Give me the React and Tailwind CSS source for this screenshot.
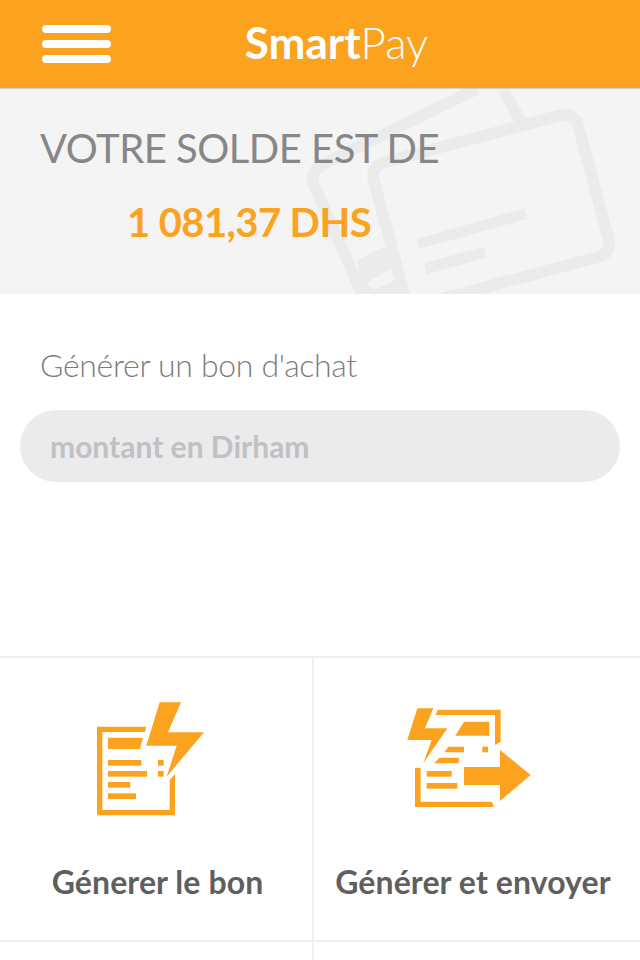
const lato = { fontFamily: "Lato, 'Open Sans', sans-serif" };

function MenuIcon() {
  return (
    <div className="flex flex-col gap-[7px] w-[69px]">
      <span className="h-[8px] rounded-full bg-white" />
      <span className="h-[8px] rounded-full bg-white" />
      <span className="h-[8px] rounded-full bg-white" />
    </div>
  );
}

function Wallet() {
  return (
    <svg
      className="absolute right-0 top-0 w-[350px] h-[205px]"
      viewBox="0 12 1050 615"
      fill="none"
    >
      <g stroke="#ebebeb" strokeWidth="35">
        <path d="M560 12 L105 235 Q55 258 72 300 L222 640" />
        <path d="M640 12 L692 110" />
        <rect x="240" y="244" width="635" height="440" rx="40" transform="rotate(-15 240 244)" />
      </g>
      <path
        fillRule="evenodd"
        fill="#ebebeb"
        d="M203 524 L282 486 L352 627 L210 627 Z M232 592 Q240 618 258 612 L312 586 L302 552 Z"
      />
      <path fill="#ebebeb" d="M380 462 L705 370 L712 402 L388 492 Z M402 535 L580 485 L588 518 L410 568 Z" />
    </svg>
  );
}

function BoltDocIcon() {
  return (
    <svg width="150" height="135" viewBox="0 0 450 405" fill="#fba21f">
      <path d="M84 110 H232 L228 126 H100 V360 H302 V270 L318 252 V376 H84 Z" />
      <path d="M117 143 H222 L213 177 H117 Z" />
      <rect x="117" y="210" width="100" height="17" />
      <rect x="117" y="243" width="117" height="17" />
      <rect x="117" y="276" width="67" height="17" />
      <rect x="117" y="310" width="84" height="17" />
      <rect x="267" y="210" width="17" height="17" />
      <rect x="267" y="243" width="17" height="17" />
      <path d="M272 37 H336 L297 127 H405 L293 260 L323 167 H232 Z" />
    </svg>
  );
}

function BoltSendIcon() {
  return (
    <svg width="150" height="120" viewBox="0 0 450 360" fill="#fba21f">
      <path d="M82 40 H130 L105 100 H172 L100 205 L125 135 H52 Z" />
      <path d="M143 44 H332 V140 L315 150 V60 H137 Z" />
      <path d="M222 80 H298 V122 H196 Z" />
      <path d="M175 155 H222 V172 H163 Z" />
      <path d="M148 188 H207 L205 205 H133 Z" />
      <rect x="277" y="155" width="17" height="17" />
      <path d="M75 218 H92 V320 H305 L312 336 H75 Z" />
      <rect x="110" y="228" width="75" height="17" />
      <rect x="110" y="264" width="92" height="17" />
      <path d="M222 216 H330 V165 L422 240 L330 318 V270 H222 Z" />
    </svg>
  );
}

function ActionTile({ icon, label, className, iconClass, labelClass }) {
  return (
    <button className={`flex flex-col items-center h-[282px] ${className}`}>
      <div className={`h-[194px] flex items-center justify-center ${iconClass}`}>{icon}</div>
      <span
        className={`mt-[10px] text-[32px] leading-[40px] tracking-[0.1px] font-bold text-[#5f5f5f] whitespace-nowrap ${labelClass}`}
      >
        {label}
      </span>
    </button>
  );
}

export default function App() {
  return (
    <div className="h-[960px] overflow-hidden bg-white" style={lato}>
      <header className="h-[89px] bg-[#fba21f] border-b border-[#cfcfcf] relative flex items-center pl-[42px]">
        <MenuIcon />
        <div className="absolute inset-x-0 top-[14px] pl-[33px] text-center text-[44px] leading-[56px] text-white">
          <span className="font-bold">Smart</span>
          <span className="font-light">Pay</span>
        </div>
      </header>

      <section className="relative h-[205px] bg-[#f4f4f4] overflow-hidden pl-[40px] pt-[34px]">
        <Wallet />
        <h1 className="relative text-[40px] leading-[50px] tracking-[-0.5px] text-[#878787]">VOTRE SOLDE EST DE</h1>
        <p className="relative mt-[25px] ml-[87px] text-[40px] leading-[48px] tracking-[-0.6px] font-bold text-[#fba21f]">
          1 081,37 DHS
        </p>
      </section>

      <section className="pt-[49px] px-[20px] h-[362px]">
        <p className="pl-[20px] text-[32px] leading-[43px] tracking-[-0.33px] font-light text-[#7d7d7d]">
          Générer un bon d'achat
        </p>
        <input
          className="mt-[24px] w-full h-[72px] rounded-full bg-[#ebebeb] pl-[30px] text-[30px] font-bold outline-none placeholder:text-[#c0c0c6]"
          placeholder="montant en Dirham"
        />
      </section>

      <div className="grid grid-cols-[314px_1fr] border-t-2 border-[#efefef]">
        <ActionTile
          icon={<BoltDocIcon />}
          label="Génerer le bon"
          className="border-r-2 border-[#efefef]"
          iconClass="mr-[24px] pt-[4px]"
          labelClass="ml-[3px]"
        />
        <ActionTile icon={<BoltSendIcon />} label="Générer et envoyer" iconClass="mr-[24px]" labelClass="mr-[8px]" />
        <div className="h-[20px] border-t-2 border-r-2 border-[#efefef]" />
        <div className="h-[20px] border-t-2 border-[#efefef]" />
      </div>
    </div>
  );
}
